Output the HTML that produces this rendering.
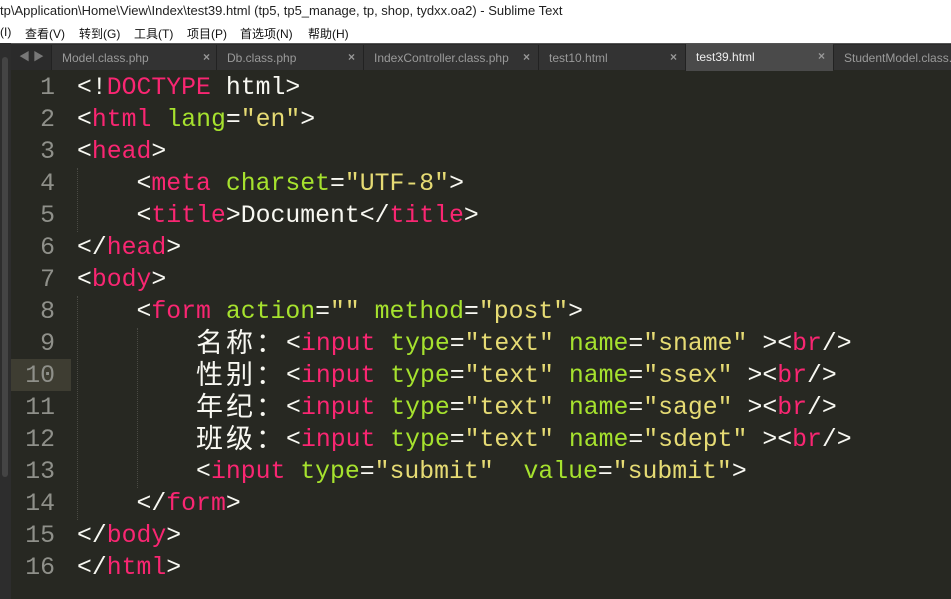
<!DOCTYPE html>
<html><head><meta charset="utf-8"><style>
*{margin:0;padding:0;box-sizing:border-box}
body{width:951px;height:599px;overflow:hidden;background:#272822;position:relative;font-family:"Liberation Sans","Noto Sans CJK SC",sans-serif}
.title{position:absolute;left:0;top:0;width:951px;height:22px;background:#fff;font-size:13px;color:#222;padding:3px 0 0 0;white-space:nowrap}
.menu{position:absolute;left:0;top:22px;width:951px;height:21px;background:#fff;font-size:12px;color:#111;white-space:nowrap}
.menu span{position:absolute;top:3px}
.tabs{position:absolute;left:0;top:43px;width:951px;height:27px;background:#2b2b2b;border-top:1px solid #555}
.tab{position:absolute;top:1px;height:25px;background:#333;border-left:1px solid #222;color:#9a9a9a;font-size:12px;padding:6px 0 0 10px;white-space:nowrap;overflow:hidden}
.tab .x{position:absolute;right:8px;top:5px;color:#999;font-size:12px;font-weight:bold}
.tab.act{background:#4a4a4a;color:#eee;top:0;height:27px}
.leftbar{position:absolute;left:0;top:43px;width:11px;height:556px;background:#2d2d2d}
.leftbar i{position:absolute;left:2px;top:14px;width:6px;height:420px;background:#444;border-radius:3px}
.hl{position:absolute;left:11px;top:359px;width:60px;height:32px;background:#3e3d32}
.ln{position:absolute;left:11px;width:44px;text-align:right;font-family:"Liberation Mono",monospace;font-size:24.8px;color:#8f908a;line-height:32px}
.code{position:absolute;left:77px;top:72px;font-family:"Liberation Mono","Noto Sans CJK SC",monospace;font-size:24.8px;line-height:32px;color:#f8f8f2;white-space:pre}
.c{display:inline-block;width:30px;text-align:left;font-size:27px;line-height:32px;vertical-align:top;position:relative;top:2px}
.p{color:#f92672}.g{color:#a6e22e}.y{color:#e6db74}
.guide{position:absolute;top:168px;width:0;border-left:1px dotted #4a4a44}
</style></head><body>
<div class="title">tp\Application\Home\View\Index\test39.html (tp5, tp5_manage, tp, shop, tydxx.oa2) - Sublime Text</div>
<div class="menu"><span style="left:0">(I)</span><span style="left:25px">查看(V)</span><span style="left:79px">转到(G)</span><span style="left:134px">工具(T)</span><span style="left:187px">项目(P)</span><span style="left:240px">首选项(N)</span><span style="left:308px">帮助(H)</span></div>
<div class="tabs">
<span style="position:absolute;left:19px;top:4px;color:#777;font-size:11px">◀ ▶</span>
<div class="tab" style="left:51px;width:167px">Model.class.php<span class="x">×</span></div>
<div class="tab" style="left:216px;width:147px">Db.class.php<span class="x">×</span></div>
<div class="tab" style="left:363px;width:175px">IndexController.class.php<span class="x">×</span></div>
<div class="tab" style="left:538px;width:147px">test10.html<span class="x">×</span></div>
<div class="tab act" style="left:685px;width:148px">test39.html<span class="x">×</span></div>
<div class="tab" style="left:833px;width:118px">StudentModel.class.php</div>
</div>
<div class="leftbar"><i></i></div>
<div class="hl"></div>
<div class="ln" style="top:72px">1<br>2<br>3<br>4<br>5<br>6<br>7<br>8<br>9<br>10<br>11<br>12<br>13<br>14<br>15<br>16</div>
<div class="guide" style="left:77px;height:64px"></div>
<div class="guide" style="left:77px;top:296px;height:224px"></div>
<div class="guide" style="left:137px;top:328px;height:160px"></div>
<div class="code">&lt;!<span class="p">DOCTYPE</span> html&gt;
&lt;<span class="p">html</span> <span class="g">lang</span>=<span class="y">"en"</span>&gt;
&lt;<span class="p">head</span>&gt;
    &lt;<span class="p">meta</span> <span class="g">charset</span>=<span class="y">"UTF-8"</span>&gt;
    &lt;<span class="p">title</span>&gt;Document&lt;/<span class="p">title</span>&gt;
&lt;/<span class="p">head</span>&gt;
&lt;<span class="p">body</span>&gt;
    &lt;<span class="p">form</span> <span class="g">action</span>=<span class="y">""</span> <span class="g">method</span>=<span class="y">"post"</span>&gt;
        <span class="c">名</span><span class="c">称</span><span class="c">：</span>&lt;<span class="p">input</span> <span class="g">type</span>=<span class="y">"text"</span> <span class="g">name</span>=<span class="y">"sname"</span> &gt;&lt;<span class="p">br</span>/&gt;
        <span class="c">性</span><span class="c">别</span><span class="c">：</span>&lt;<span class="p">input</span> <span class="g">type</span>=<span class="y">"text"</span> <span class="g">name</span>=<span class="y">"ssex"</span> &gt;&lt;<span class="p">br</span>/&gt;
        <span class="c">年</span><span class="c">纪</span><span class="c">：</span>&lt;<span class="p">input</span> <span class="g">type</span>=<span class="y">"text"</span> <span class="g">name</span>=<span class="y">"sage"</span> &gt;&lt;<span class="p">br</span>/&gt;
        <span class="c">班</span><span class="c">级</span><span class="c">：</span>&lt;<span class="p">input</span> <span class="g">type</span>=<span class="y">"text"</span> <span class="g">name</span>=<span class="y">"sdept"</span> &gt;&lt;<span class="p">br</span>/&gt;
        &lt;<span class="p">input</span> <span class="g">type</span>=<span class="y">"submit"</span>  <span class="g">value</span>=<span class="y">"submit"</span>&gt;
    &lt;/<span class="p">form</span>&gt;
&lt;/<span class="p">body</span>&gt;
&lt;/<span class="p">html</span>&gt;</div>
</body></html>
